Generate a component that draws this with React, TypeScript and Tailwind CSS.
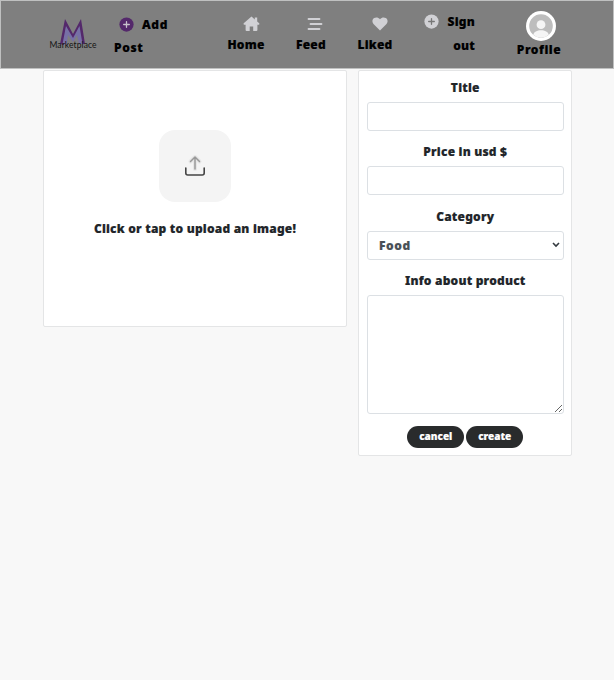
import type { ReactNode } from "react";

function Logo() {
  return (
    <svg width="50" height="32" viewBox="0 0 50 32" className="block">
      <path d="M12 26 17 1 25 16 33 1 37 26 33 26 31 10 25 23 18 9 16 27Z" fill="#54286b" />
      <path d="M14.5 26 18 8 25 20 31.5 8 34.5 26 31 26 29 17 25 24 20 17 18.5 27Z" fill="#7770a6" />
      <text x="1.5" y="29.5" fontFamily="Lato, sans-serif" fontSize="8.5" fontWeight="400" fill="#141414" textLength="47">
        Marketplace
      </text>
    </svg>
  );
}

function Plus({ color, sign }: { color: string; sign: string }) {
  return (
    <svg width="15" height="15" viewBox="0 0 16 16" className="block shrink-0">
      <circle cx="8" cy="8" r="7.6" fill={color} />
      <path d="M8 5v6M5 8h6" stroke={sign} strokeWidth="1.4" strokeLinecap="round" />
    </svg>
  );
}

function NavItem({ icon, label, className }: { icon: ReactNode; label: string; className: string }) {
  return (
    <a className={"flex flex-col items-center pt-[14px] " + className}>
      <span className="flex h-[17px] w-full items-center justify-center pl-2.5">{icon}</span>
      <span className="mt-[2px] leading-[22px]">{label}</span>
    </a>
  );
}

function Field({ label, children }: { label: string; children: ReactNode }) {
  return (
    <label className="flex flex-col">
      <span className="mb-[4px] text-center leading-[20px] whitespace-pre">{label}</span>
      {children}
    </label>
  );
}

const control = "block w-full rounded-[3px] border border-[#dce0e4] bg-white";

export default function App() {
  return (
    <div className="h-[680px] w-[614px] overflow-hidden bg-[#f8f8f8] font-['Noto_Sans',sans-serif] text-[12px] font-black tracking-[0.2px] text-[#212529] [-webkit-text-stroke:0.15px_currentColor]">
      <nav className="flex h-[69px] items-start border border-[#bfc0c0] bg-[#7f7f7f] whitespace-nowrap text-black">
        <div className="ml-[47px] w-[50px] pt-[17px] tracking-normal [-webkit-text-stroke:0]">
          <Logo />
        </div>
        <div className="ml-[16px] w-[84px] pt-[12px] leading-[23px]">
          <div className="flex items-center gap-[8px] pl-[5px]">
            <Plus color="#54286b" sign="#c8c0cc" />
            <span className="tracking-[0.6px]">Add</span>
          </div>
          <div className="tracking-[0.6px]">Post</div>
        </div>
        <NavItem
          className="ml-[22px] w-[52px]"
          label="Home"
          icon={
            <svg width="17" height="16" viewBox="0 0 17 16" fill="#d1d1d5">
              <path d="M8.5 0.5 0.7 7.3Q.3 8.5 1.2 8.7H2.6V14Q2.6 15 3.6 15H6.7V10.5H10.2V15H13.4Q14.4 15 14.4 14V8.7H15.8Q16.7 8.5 16.2 7.3L14.2 5.6V1.5H11.8V3.4Z" />
            </svg>
          }
        />
        <NavItem
          className="ml-[13px] w-[52px]"
          label="Feed"
          icon={
            <svg width="16" height="14" viewBox="0 0 16 14" stroke="#d1d1d5" strokeWidth="1.8" strokeLinecap="round" className="-ml-0.5">
              <path d="M1.5 2h11M3.5 7h11M1.5 12h11" />
            </svg>
          }
        />
        <NavItem
          className="ml-[12px] w-[52px]"
          label="Liked"
          icon={
            <svg width="16" height="14" viewBox="0 0 16 14" fill="#d1d1d5">
              <path d="M8 13.4 1.5 7C-.4 5 .4 2.2 2.2 1.1 4.2 0 6.5.6 8 2.3 9.5.6 11.8 0 13.8 1.1 15.6 2.2 16.4 5 14.5 7Z" />
            </svg>
          }
        />
        <div className="ml-[23px] w-[51px] pt-[10px] text-right leading-[23px]">
          <div className="-mt-px mb-px flex items-center justify-between">
            <Plus color="#d1d1d5" sign="#777" />
            <span>Sign</span>
          </div>
          <div>out</div>
        </div>
        <div className="ml-[37px] flex w-[54px] flex-col items-center pt-[10px]">
          <svg width="30" height="30" viewBox="0 0 30 30" className="ml-[4px] block">
            <circle cx="15" cy="15" r="15" fill="#fff" />
            <circle cx="15" cy="15" r="11.8" fill="#bdbdbd" />
            <circle cx="15" cy="13.7" r="4.4" fill="#f5f5f5" />
            <path d="M7.2 23.8C8 20.7 11 19.2 15 19.2s7 1.5 7.8 4.6A11.8 11.8 0 0 1 7.2 23.8Z" fill="#f5f5f5" />
          </svg>
          <span className="mt-[-2px] leading-[22px] tracking-[0.5px]">Profile</span>
        </div>
      </nav>
      <main className="flex items-start gap-[12px] pt-px pl-[43px]">
        <section className="flex h-[257px] w-[304px] flex-col items-center rounded-[2px] border border-[#e4e5e6] bg-white pt-[59px]">
          <div className="flex size-[72px] items-center justify-center rounded-[16px] bg-[#f4f4f4]">
            <svg width="24" height="26" viewBox="0 0 24 26" fill="none" strokeLinecap="round" strokeLinejoin="round">
              <path d="M12 16V4M7.5 8.5 12 4l4.5 4.5" stroke="#e6e6e6" strokeWidth="4" />
              <path d="M12 16V4M7.5 8.5 12 4l4.5 4.5" stroke="#999" strokeWidth="1.5" />
              <path d="M2.8 15v5q0 2 2 2h14.4q2 0 2-2v-5" stroke="#444" strokeWidth="1.6" />
            </svg>
          </div>
          <p className="mt-[17px] leading-[20px] whitespace-nowrap">Click or tap to upload an image!</p>
        </section>
        <form className="-ml-px h-[386px] w-[214px] rounded-[2px] border border-[#e4e5e6] bg-white pt-[7px] pr-[7.5px] pl-[8px]">
          <div className="flex flex-col gap-[11.6px]">
            <Field label="Title">
              <input className={control + " h-[28.8px]"} />
            </Field>
            <Field label="Price in usd $">
              <input className={control + " h-[28.8px]"} />
            </Field>
            <Field label="Category">
              <div className={control + " flex h-[28.8px] items-center justify-between pr-[3px] pl-[11px] text-[#495057]"}>
                <span className="pt-px tracking-[0.6px]">Food</span>
                <svg width="8" height="6" viewBox="0 0 8 6" fill="none" stroke="#343a40" strokeWidth="1.6">
                  <path d="m1 1 3 3 3-3" />
                </svg>
              </div>
            </Field>
            <Field label="Info about product">
              <textarea className={control + " h-[118.8px] resize"} />
            </Field>
          </div>
          <div className="mt-[12px] flex justify-center gap-[2px] text-[10px] tracking-normal text-white">
            <button type="button" className="h-[22px] w-[57px] rounded-full bg-[#292b2c]">cancel</button>
            <button type="button" className="h-[22px] w-[57px] rounded-full bg-[#292b2c]">create</button>
          </div>
        </form>
      </main>
    </div>
  );
}
